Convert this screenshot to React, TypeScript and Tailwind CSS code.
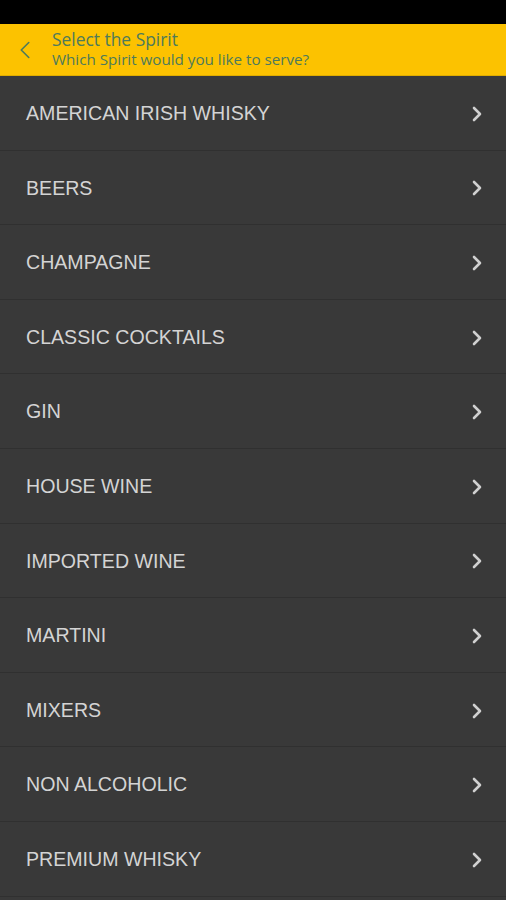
import { ChevronLeft, ChevronRight } from 'lucide-react'

const spirits = [
  'AMERICAN IRISH WHISKY',
  'BEERS',
  'CHAMPAGNE',
  'CLASSIC COCKTAILS',
  'GIN',
  'HOUSE WINE',
  'IMPORTED WINE',
  'MARTINI',
  'MIXERS',
  'NON ALCOHOLIC',
  'PREMIUM WHISKY',
]

const App = () => {
  return (
    <div className="w-[506px] h-[900px] overflow-hidden bg-[#393939] flex flex-col">
      {/* Status bar */}
      <div className="h-[24px] bg-black shrink-0" />

      {/* Header */}
      <div className="h-[52px] shrink-0 bg-[#fcc200] border-b border-[#e0ad00] flex items-center font-['Open_Sans',sans-serif]">
        <div className="w-[52px] pl-[10px] flex items-center">
          <ChevronLeft className="w-[30px] h-[30px] text-[#4d7a5c]" strokeWidth={1.3} />
        </div>
        <div className="flex flex-col text-[#4d7a5c] leading-[20px] -mt-[1px]">
          <span className="text-[17.4px]">Select the Spirit</span>
          <span className="text-[15.2px] font-medium">Which Spirit would you like to serve?</span>
        </div>
      </div>

      {/* Spirit list */}
      <div className="flex flex-col">
        {spirits.map(name => (
          <div
            key={name}
            className="h-[74.6px] shrink-0 border-b border-[#303030] flex items-center justify-between pl-[26px] pr-[17px] pt-[2px]"
          >
            <span className="text-[19.6px] text-[#d4d4d4] font-['Liberation_Sans',Arial,sans-serif]">{name}</span>
            <ChevronRight className="w-[24px] h-[24px] text-[#d0d0d0]" strokeWidth={2.6} />
          </div>
        ))}
      </div>
    </div>
  )
}

export default App
